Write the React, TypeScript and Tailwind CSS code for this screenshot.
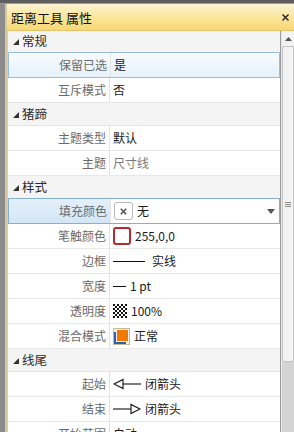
import React from "react";

const Tri = () => (
  <svg width="6" height="6" viewBox="0 0 6 6" className="ml-[5px] mt-[1px]">
    <polygon points="6,0 6,6 0,6" fill="#333" />
  </svg>
);

function Cat({ label, h }: { label: string; h: string }) {
  return (
    <div className={`flex items-center ${h} bg-[#f4f4f4] border-b border-[#e4e4e4]`}>
      <Tri />
      <span className="ml-[3px] text-[12.5px] text-[#2a2a2a] leading-none">{label}</span>
    </div>
  );
}

function Row({
  label,
  children,
  variant,
}: {
  label: string;
  children: React.ReactNode;
  variant?: "sel" | "edit";
}) {
  const rowCls =
    variant === "sel"
      ? "bg-gradient-to-b from-[#f7fbfe] to-[#e5f1fa] border border-[#9bbcd6] h-[26px] -mt-px"
      : variant === "edit"
      ? "bg-white border border-[#86aed0] h-[26px] -mt-px"
      : "border-b border-[#e8e8e8] h-[25px]";
  const labelCls =
    variant === "edit" ? "bg-gradient-to-b from-[#e4f0fa] to-[#d3e6f6]" : "";
  return (
    <div className={`flex ${rowCls}`}>
      <div
        className={`w-[102px] shrink-0 flex items-center justify-end pr-[3px] text-[12px] text-[#6b6b6b] border-r border-[#e2e2e2] ${labelCls}`}
      >
        {label}
      </div>
      <div className="flex-1 flex items-center pl-[3px] text-[12px] text-[#1a1a1a] relative">
        {children}
      </div>
    </div>
  );
}

const Checker = () => (
  <svg width="14" height="14" viewBox="0 0 14 14">
    <defs>
      <pattern id="ck" width="4" height="4" patternUnits="userSpaceOnUse">
        <rect width="4" height="4" fill="#fff" />
        <rect width="2" height="2" fill="#111" />
        <rect x="2" y="2" width="2" height="2" fill="#111" />
      </pattern>
    </defs>
    <rect width="14" height="14" fill="url(#ck)" />
  </svg>
);

const Blend = () => (
  <svg width="17" height="17" viewBox="0 0 17 17">
    <rect x="0.5" y="0.5" width="16" height="16" fill="#f4efe6" stroke="#c9b99a" />
    <path d="M2 4 V15 H13" fill="none" stroke="#2f5fa8" strokeWidth="2" />
    <rect x="4" y="2" width="11" height="11" fill="#f07a00" />
  </svg>
);

const ArrowLeft = () => (
  <svg width="28" height="12" viewBox="0 0 28 12">
    <polygon points="1,6 10,1.5 10,10.5" fill="#fff" stroke="#111" strokeWidth="1.1" />
    <line x1="10" y1="6" x2="28" y2="6" stroke="#111" strokeWidth="1.1" />
  </svg>
);

const ArrowRight = () => (
  <svg width="28" height="12" viewBox="0 0 28 12">
    <line x1="0" y1="6" x2="18" y2="6" stroke="#111" strokeWidth="1.1" />
    <polygon points="27,6 18,1.5 18,10.5" fill="#fff" stroke="#111" strokeWidth="1.1" />
  </svg>
);

export default function App() {
  return (
    <div className="w-[294px] h-[432px] overflow-hidden bg-[#8a8a8a] flex flex-col font-['Noto_Sans_CJK_SC','Microsoft_YaHei',sans-serif]">
      <div className="h-[4px] shrink-0 bg-[#5e5e5e] border-b border-[#9a9a9a]" />
      <div className="flex flex-1 min-h-0">
        <div className="w-[5px] shrink-0 bg-[#8c8c8c]" />
        <div className="w-[2px] shrink-0 bg-[#d6c79c]" />
        <div className="flex-1 flex flex-col min-w-0 bg-white">
          {/* title bar */}
          <div className="h-[27px] shrink-0 flex items-center justify-between bg-gradient-to-b from-[#fdf3d2] via-[#fbe69c] to-[#f8d873] border-b border-[#e5c46a] pl-[4px] pr-[4px]">
            <span className="text-[13px] text-[#111] leading-none">距离工具 属性</span>
            <svg width="7" height="7" viewBox="0 0 7 7" className="mr-[1px]">
              <path d="M0.5 0.5 L6.5 6.5 M6.5 0.5 L0.5 6.5" stroke="#222" strokeWidth="1.4" />
            </svg>
          </div>
          <div className="flex flex-1 min-h-0">
            {/* grid */}
            <div className="flex-1 min-w-0 border-l border-[#cfcfcf] border-r border-r-[#9c9c9c] overflow-hidden">
              <Cat label="常规" h="h-[22px]" />
              <Row label="保留已选" variant="sel">是</Row>
              <Row label="互斥模式">否</Row>
              <Cat label="猪蹄" h="h-[23px]" />
              <Row label="主题类型">默认</Row>
              <Row label="主题">
                <span className="text-[#7a7a7a]">尺寸线</span>
              </Row>
              <Cat label="样式" h="h-[23px]" />
              <Row label="填充颜色" variant="edit">
                <div className="w-[19px] h-[18px] border border-[#b9b9b9] rounded-[3px] bg-white flex items-center justify-center">
                  <svg width="7" height="7" viewBox="0 0 7 7">
                    <path d="M0.8 0.8 L6.2 6.2 M6.2 0.8 L0.8 6.2" stroke="#555" strokeWidth="1.6" />
                  </svg>
                </div>
                <span className="ml-[4px]">无</span>
                <svg width="8" height="5" viewBox="0 0 8 5" className="absolute right-[4px] top-[10px]">
                  <polygon points="0,0 8,0 4,5" fill="#555" />
                </svg>
              </Row>
              <Row label="笔触颜色">
                <div className="w-[18px] h-[18px] border-2 border-[#b72a30] rounded-[3px] bg-white" />
                <span className="ml-[4px]">255,0,0</span>
              </Row>
              <Row label="边框">
                <div className="w-[32px] h-px bg-[#111]" />
                <span className="ml-[7px]">实线</span>
              </Row>
              <Row label="宽度">
                <div className="w-[13px] h-px bg-[#111]" />
                <span className="ml-[4px]">1 pt</span>
              </Row>
              <Row label="透明度">
                <Checker />
                <span className="ml-[4px]">100%</span>
              </Row>
              <Row label="混合模式">
                <Blend />
                <span className="ml-[4px]">正常</span>
              </Row>
              <Cat label="线尾" h="h-[23px]" />
              <Row label="起始">
                <ArrowLeft />
                <span className="ml-[4px]">闭箭头</span>
              </Row>
              <Row label="结束">
                <ArrowRight />
                <span className="ml-[4px]">闭箭头</span>
              </Row>
              <Row label="开始范围">自动</Row>
            </div>
            {/* scrollbar */}
            <div className="w-[13px] shrink-0 flex flex-col bg-[#d9d9d9] border-l border-[#e8e8e8]">
              <div className="h-[15px] shrink-0 bg-[#f2f2f2] flex items-center justify-center">
                <svg width="7" height="4" viewBox="0 0 7 4">
                  <polygon points="3.5,0 7,4 0,4" fill="#555" />
                </svg>
              </div>
              <div className="h-[316px] shrink-0 bg-[#f3f3f3] border border-[#c4c4c4] rounded-[2px] flex items-center justify-center">
                <div className="flex flex-col gap-[1px]">
                  <div className="w-[6px] h-px bg-[#8a8a8a]" />
                  <div className="w-[6px] h-px bg-[#8a8a8a]" />
                  <div className="w-[6px] h-px bg-[#8a8a8a]" />
                </div>
              </div>
              <div className="flex-1 bg-[#d4d4d4]" />
            </div>
          </div>
        </div>
      </div>
    </div>
  );
}
